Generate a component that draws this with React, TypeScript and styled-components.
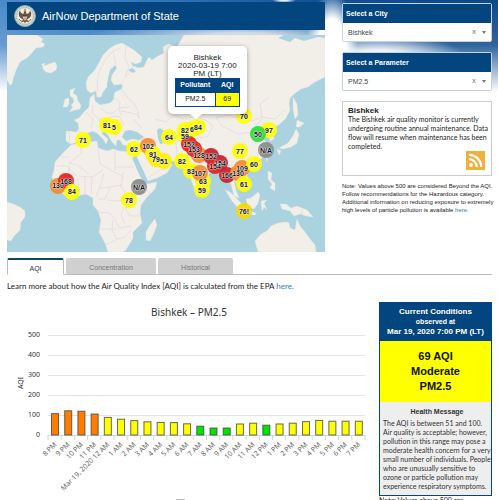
import React from 'react';
import styled, { createGlobalStyle } from 'styled-components';

const navy = '#03467f';

const GlobalStyle = createGlobalStyle`
  * { box-sizing: border-box; }
  html { scrollbar-width: none; }
  body {
    margin: 0;
    background: #fff;
    color: #222;
    font-family: "Liberation Sans", Arial, sans-serif;
    font-size: 7px;
  }
`;

const Page = styled.div`
  min-height: 100vh;
  padding: 2px 6px 0 7px;
  background:
    radial-gradient(ellipse 26px 60px at calc(100% - 166px) 52px, #fff 55%, rgba(255, 255, 255, 0) 100%),
    radial-gradient(ellipse 90px 26px at calc(100% - 120px) 60px, #f4f7fa 35%, rgba(244, 247, 250, 0) 100%),
    radial-gradient(ellipse 150px 12px at calc(100% - 258px) 35px, #cfdae8 20%, rgba(207, 218, 232, 0) 100%),
    radial-gradient(ellipse 12px 3px at calc(100% - 214px) 0, #e9f0f6 30%, rgba(233, 240, 246, 0) 100%),
    linear-gradient(to bottom, rgba(255, 255, 255, 0) 0, rgba(255, 255, 255, 0.15) 45px, #fff 92px),
    linear-gradient(to right, #4a8aca, #2f72b8 35%, #0f4f95 65%, #0b488c);
`;

const TopRow = styled.div`
  display: grid;
  grid-template-columns: minmax(0, 1fr) 150px;
  column-gap: 17px;
`;

const Brand = styled.header`
  display: flex;
  align-items: center;
  gap: 6px;
  height: 28px;
  padding-left: 7px;
  background: ${navy};
  color: #fff;
`;

const BrandTitle = styled.h1`
  margin: 0;
  font-size: 11px;
  font-weight: 400;
`;

const MapFrame = styled.div`
  position: relative;
  aspect-ratio: 318 / 217;
  margin-top: 5px;
  background: #aad3df;
  overflow: hidden;
`;

const MapArt = styled.svg`
  display: block;
  width: 100%;
  height: 100%;
`;

const Pin = styled.button<{ $x: number; $y: number }>`
  position: absolute;
  left: ${(p) => ((p.$x - 7) / 318) * 100}%;
  top: ${(p) => ((p.$y - 35) / 217) * 100}%;
  width: 16px;
  height: 16px;
  margin: -8px 0 0 -8px;
  padding: 0;
  display: flex;
  align-items: center;
  justify-content: center;
  border: 0;
  border-radius: 50%;
  background: none;
  color: #111;
  font: bold 7px "Liberation Sans", Arial, sans-serif;
  text-shadow: 0 0 1px #fff, 0 0 1px #fff, 0 0 2px #fff;
`;

const Popup = styled.div`
  position: absolute;
  left: 50.6%;
  top: 5%;
  width: 79px;
  height: 68px;
  padding: 8px 7px 0;
  border-radius: 5px;
  background: #fff;
  box-shadow: 0 1px 5px rgba(0, 0, 0, 0.35);
  font-size: 8px;
  line-height: 8px;
  text-align: center;

  &::after {
    content: "";
    position: absolute;
    left: 22px;
    top: 100%;
    border: 6px solid transparent;
    border-top: 5px solid #fff;
    border-bottom: 0;
  }
`;

const PopupTable = styled.table`
  width: 100%;
  border-collapse: collapse;
  table-layout: fixed;
  font-size: 7px;
  th {
    height: 14px;
    padding: 0;
    background: ${navy};
    color: #fff;
    border: 1px solid ${navy};
  }
  th:first-child { width: 62%; }
  td {
    height: 14px;
    padding: 0;
    border: 1px solid ${navy};
  }
  td:last-child { background: #ff0; }
`;

const Sidebar = styled.aside`
  padding-top: 1px;
`;

const Picker = styled.div`
  margin-bottom: 10px;
  border: 1px solid #c9d3dc;
  border-radius: 2px;
  background: #fff;
`;

const PickerLabel = styled.label`
  display: block;
  height: 19px;
  padding-left: 3px;
  background: ${navy};
  color: #fff;
  font-weight: 700;
  line-height: 19px;
`;

const PickerField = styled.div`
  display: flex;
  align-items: center;
  height: 18px;
  padding: 0 5px;
`;

const PickerSelect = styled.select`
  flex: 1;
  min-width: 0;
  padding: 0;
  border: 0;
  appearance: none;
  background: transparent;
  color: #444;
  font: inherit;
`;

const ClearButton = styled.button`
  padding: 0;
  border: 0;
  background: none;
  color: #777;
  font: inherit;
  font-size: 8px;
  line-height: 8px;
`;

const Caret = styled.span`
  margin-left: 6px;
  border: 2px solid transparent;
  border-top: 3px solid #777;
  border-bottom: 0;
`;

const InfoCard = styled.section`
  padding: 4px 2px 5px 5px;
  border: 1px solid #ccc;
  background: #fff;
`;

const InfoTitle = styled.h2`
  margin: 0;
  font-size: 8px;
  line-height: 9px;
`;

const Paragraph = styled.p`
  margin: 0;
  font-family: Lato, Arial, sans-serif;
  line-height: 9px;
`;

const FeedLink = styled.a`
  display: block;
  width: 19px;
  margin: 0 4px 0 auto;
  svg { display: block; }
`;

const Note = styled.p`
  margin: 6px -4px 0 0;
  font-size: 6px;
  line-height: 8px;
`;

const Link = styled.a`
  color: #337ab7;
  text-decoration: none;
`;

const Tabs = styled.div`
  display: flex;
  gap: 2px;
  margin-top: 6px;
  border-bottom: 1px solid #bbb;
`;

const Tab = styled.button<{ $w: number; $active?: boolean }>`
  width: ${(p) => p.$w}px;
  height: 17px;
  margin-bottom: -1px;
  padding: 2px 0 0;
  border: 1px solid ${(p) => (p.$active ? '#bbb' : '#d0d0d0')};
  border-top: ${(p) => (p.$active ? '2px solid #0b4a5a' : '1px solid #d0d0d0')};
  border-bottom-color: ${(p) => (p.$active ? '#fff' : '#bbb')};
  border-radius: 2px 2px 0 0;
  background: ${(p) => (p.$active ? '#fff' : '#d0d0d0')};
  color: ${(p) => (p.$active ? '#333' : '#777')};
  font: 7px "Liberation Sans", Arial, sans-serif;
`;

const LearnMore = styled(Paragraph)`
  margin-top: 7px;
  font-size: 8px;
`;

const BottomRow = styled.div`
  display: grid;
  grid-template-columns: minmax(0, 1fr) 113px;
  column-gap: 12px;
  margin-top: 11px;
`;

const ChartArt = styled.svg`
  display: block;
  width: 100%;
  height: auto;
  font-family: "Noto Sans", "Open Sans", sans-serif;
`;

const Conditions = styled.section`
  border: 1px solid ${navy};
  background: #eee;
`;

const ConditionsHead = styled.header`
  height: 38px;
  padding-top: 4px;
  background: ${navy};
  color: #fff;
  font-size: 7px;
  font-weight: 700;
  line-height: 10px;
  text-align: center;
`;

const HeadLine = styled.div`
  font-size: 8px;
  white-space: nowrap;
`;

const Reading = styled.div`
  padding: 8px 0;
  background: #ff0;
  color: #111;
  font-size: 11px;
  font-weight: 700;
  line-height: 15px;
  text-align: center;
`;

const Health = styled.div`
  padding: 5px 0 4px 3px;
  color: #333;
`;

const HealthTitle = styled.h3`
  margin: 0 0 2px;
  font-size: 7px;
  line-height: 10px;
  text-align: center;
`;

const Y = '#ffff00', O = '#f58a2c', R = '#e02420', C = '#c9202c', G = '#2fdc3c', N = '#8b8b8b';
const pins: [string, number, number, string][] = [
  ['81', 107, 125, Y], ['5', 114, 127, Y], ['71', 83, 140, Y], ['64', 169, 137, Y],
  ['62', 134, 149, Y], ['102', 148, 146, O], ['91', 153, 154, Y], ['79', 156, 159, '#fff000'],
  ['51', 164, 161, '#fff000'], ['130', 58, 186, O], ['168', 66, 181, R], ['84', 72, 192, Y],
  ['N/A', 139, 187, N], ['78', 129, 200, Y], ['82', 185, 130, Y], ['59', 185, 136, Y],
  ['6', 192, 129, Y], ['84', 198, 127, Y], ['128', 199, 155, O], ['152', 189, 144, R],
  ['153', 194, 149, R], ['82', 182, 161, Y], ['83', 191, 171, Y], ['63', 203, 181, Y],
  ['107', 200, 173, O], ['59', 202, 190, Y], ['152', 211, 156, C], ['154', 220, 163, C],
  ['154', 215, 166, R], ['166', 227, 175, C], ['109', 242, 168, O], ['130', 238, 173, O],
  ['60', 254, 164, Y], ['61', 244, 184, Y], ['77', 240, 151, Y], ['N/A', 266, 150, N],
  ['97', 269, 130, Y], ['50', 258, 134, G], ['70', 244, 116, Y], ['76!', 244, 211, '#f8d800'],
];

const land = [
  // Greenland and Iceland
  'M7 35H37L43 39L41 42L45 44L43 47L36 48L31 54L27 58L20 62L17 68L15 73L13 79L12 84L10 85L7 80Z',
  'M42 64L45 63L44 66L49 64L55 62L57 66L56 70L51 73L46 72L43 69Z',
  // British Isles
  'M70 90L75 88L73 93L77 96L78 101L81 105L80 109L75 110L69 112L73 107L71 105L74 102L73 98L70 96Z',
  'M65 99L69 98L69 104L67 107L63 107Z',
  // Scandinavia with Kola
  'M86 83L88 77L94 71L99 63L103 55L109 49L115 45L122 43L127 46L134 50L142 57L141 62L136 64L131 62L133 67L130 73L126 76L122 84L114 85L111 80L112 75L117 68L115 65L110 70L108 78L107 87L103 92L101 97L97 97L96 91L91 93L87 90Z',
  // Eurasia
  'M90 98L94 94L95 101L100 105L110 103L114 99L113 93L122 89L122 82L126 76L130 73L134 66L138 68L144 67L147 60L149 57L152 60L158 56L164 53L163 47L168 44L177 47L184 35H325V77L315 82L308 87L301 89L294 94L290 98L289 104L290 110L286 118L280 124L275 127L273 132L274 139L270 141L268 134L265 131L260 133L261 137L266 142L267 150L263 157L257 162L250 166L245 167L247 175L248 182L242 188L237 183L234 181L236 190L239 198L234 196L231 184L227 180L222 173L217 169L212 171L206 177L202 185L198 194L194 188L190 176L188 168L182 165L177 161L170 161L163 156L160 154L163 160L168 161L172 165L167 173L157 178L148 181L144 174L140 164L137 157L139 151L140 145L132 146L123 145L120 140L117 140L116 146L112 142L108 135L103 130L102 134L108 139L106 144L103 139L97 133L92 131L86 134L81 138L77 142L71 144L66 141L66 131L76 132L79 129L78 123L74 120L79 118L84 112L89 107Z',
  // Africa and Madagascar
  'M71 145L80 143L97 141L98 148L107 151L113 149L120 151L131 152L134 155L133 159L137 170L142 180L147 184L157 182L155 189L147 197L141 205L140 214L142 223L137 228L133 232L133 238L126 250L123 252H108L105 243L99 232L101 220L98 211L93 205L93 198L86 194L77 196L69 198L62 193L56 187L52 177L54 170L55 162L63 153Z',
  'M155 219L157 225L154 233L150 241L146 240L146 232L150 225Z',
  // South America
  'M7 202L13 204L20 207L25 211L25 217L21 222L20 230L14 236L11 241L7 240Z',
  // Islands of South-East Asia
  'M225 190L230 192L236 198L242 204L243 210L238 208L232 201Z', 'M241 211L249 211L256 213L255 215L245 214Z',
  'M246 199L251 198L258 192L260 195L258 203L254 209L248 207Z', 'M261 201L267 200L264 203L267 210L264 207L262 211Z',
  'M268 171L272 173L271 180L275 183L275 191L270 188L272 184L268 179Z',
  'M280 204L286 204L291 208L297 206L307 210L313 217L306 216L300 214L294 216L290 211L282 209Z',
  'M266 157L268 156L267 162Z', 'M202 191L205 193L204 197L202 196Z',
  // Japan and Sakhalin
  'M297 120L304 123L300 127L296 127Z', 'M296 129L299 134L297 143L291 147L283 149L279 148L288 143L293 136Z', 'M277 149L281 151L279 155Z',
  'M293 97L297 104L298 115L295 119L293 109Z',
  // Australia
  'M258 252L255 241L261 234L267 231L271 226L278 223L286 222L289 223L290 228L295 230L297 219L300 226L305 232L310 239L315 245L316 252Z',
].join('');

const water = [
  'M122 137L125 131L130 130L137 132L144 137L140 140L132 139L126 141Z',
  'M157 130L160 128L164 131L163 135L165 143L160 144L158 138Z',
  'M132 158L136 157L143 170L147 179L145 181L139 172Z',
  'M107 82L111 86L124 86L116 89L113 98L107 101L102 97L107 90Z',
  'M306 90L315 83L325 81V103L318 101L312 95Z',
  'M128 70L132 68L136 71L133 73Z',
  'M278 38L284 35H325V38L318 37L304 41L295 38L290 42Z',
].join('');

const borders =
  'M98 92L97 83L99 72L105 60L113 51L121 48M113 51L116 65M126 46L125 58L129 67L125 77M122 90L127 97L134 103L138 111L139 118M114 98L120 102L119 110L122 116M86 112L93 119L91 128M93 105L92 113L99 119L107 118L114 116L120 117L124 125M101 108L106 113L113 113L119 108L130 107M99 119L101 127M108 119L113 126L119 128M113 128L116 137M66 133H70L69 142M76 131L85 133M134 119L141 128M121 111L136 114L140 119M140 138L149 139L154 148M147 146L153 157M140 147L144 153L151 159M155 119L166 122L174 115L184 119L196 116L207 121L213 126L207 137L198 138L190 143M216 118L229 115L241 119L252 121L262 117L275 119L285 110M216 118L222 126L238 134L251 132L262 119M165 141L176 143L182 139L190 141M176 143L177 157M183 157L190 149L195 144M198 152L209 161L217 163L222 160L229 165L236 165L244 166M222 166L225 175M235 166L239 178M262 117L260 104L269 97M80 144L82 153L69 163L77 165L89 174M98 149L100 164L111 170L124 177M115 151V170M115 167H133M61 157L69 157M56 166L66 166L77 176M69 165L69 178L58 180M79 176L92 177L103 170M92 176L91 194M104 173L100 187L96 196M99 188L110 187L122 185M123 172L121 187L128 195L137 195L144 192L139 184M110 188L105 199H98M107 200L119 201L127 196M98 212L110 213L115 219L119 228L131 226M128 200L126 210L130 216L140 216M113 220L112 230L117 239L125 237L131 230M99 229H117M105 245L112 242L117 239M124 207L121 215L125 224M64 178L66 190M78 178L79 196M85 177L85 194M146 190L151 194L156 188M148 178L158 171L169 168M302 210V215';

const values: [string, number, string][] = [
  ['8 PM', 107, '#ff7e00'], ['9 PM', 121, '#ff7e00'], ['10 PM', 119, '#ff7e00'], ['11 PM', 105, '#ff7e00'],
  ['Mar 19, 2020 12 AM', 88, Y], ['1 AM', 79, Y], ['2 AM', 72, Y], ['3 AM', 66, Y], ['4 AM', 63, Y],
  ['5 AM', 62, Y], ['6 AM', 56, Y], ['7 AM', 44, '#00e400'], ['8 AM', 35, '#00e400'], ['9 AM', 35, '#00e400'],
  ['10 AM', 55, Y], ['11 AM', 59, Y], ['12 PM', 49, '#00e400'], ['1 PM', 55, Y], ['2 PM', 59, Y],
  ['3 PM', 67, Y], ['4 PM', 73, Y], ['5 PM', 69, Y], ['6 PM', 69, Y], ['7 PM', 69, Y],
];

const Seal = () => (
  <svg width="22" height="22" viewBox="0 0 44 44" role="img" aria-label="Department of State seal">
    <circle cx="22" cy="22" r="21" fill="#d8dcd2" stroke="#8ca6b4" strokeWidth="2" />
    <circle cx="22" cy="22" r="17.5" fill="none" stroke="#79909f" strokeWidth="1.5" strokeDasharray="2 1.5" />
    <circle cx="22" cy="22" r="14.5" fill="#f1eee1" />
    <path d="M20 13q2-3 4 0l1 5q6-1 7-7 5 7 0 14l-6 4 4 6-6-2-2 4-2-4-6 2 4-6-6-4q-5-7 0-14 1 6 7 7z" fill="#71533c" />
    <path d="M18 20h8v5q0 4-4 6-4-2-4-6z" fill="#eee" />
    <path d="M18 20h8v3h-8z" fill="#29477a" />
    <path d="M20 23v6M22 23v7M24 23v6" stroke="#b54242" />
    <path d="M10 28q3 5 7 5M34 28q-3 5-7 5" stroke="#67805a" strokeWidth="2" fill="none" />
    <circle cx="22" cy="10" r="2.5" fill="#b6a96c" />
  </svg>
);

const FeedIcon = () => (
  <svg width="19" height="19" viewBox="0 0 19 19" role="img" aria-label="RSS feed">
    <rect width="19" height="19" fill="#efb03c" />
    <circle cx="5" cy="14" r="1.9" fill="#fff" />
    <path d="M3 8.2A7.8 7.8 0 0 1 10.8 16M3 3.8A12.2 12.2 0 0 1 15.2 16" fill="none" stroke="#fff" strokeWidth="2.2" />
  </svg>
);

const AqiChart = () => {
  const step = 317 / 24;
  return (
    <ChartArt viewBox="0 0 360 198" role="img" aria-label="Bishkek PM2.5 AQI by hour">
      <text x="182" y="14" fontSize="10" fill="#333" textAnchor="middle">Bishkek – PM2.5</text>
      {[0, 100, 200, 300, 400, 500].map((v) => (
        <g key={v}>
          <path d={`M41 ${133.5 - v / 5}H358`} stroke={v ? '#e3e3e3' : '#ccd6eb'} />
          <text x="33" y={135 - v / 5} fontSize="7" fill="#333" textAnchor="end">{v}</text>
        </g>
      ))}
      <text transform="translate(16 81) rotate(-90)" fontSize="7" fill="#333" textAnchor="middle">AQI</text>
      {values.map(([label, v, color], i) => {
        const x = 41 + step * i;
        return (
          <g key={i}>
            <path d={`M${x} 133v5`} stroke="#ccd6eb" />
            <rect x={x + 3.5} y={133 - v / 5} width="7" height={v / 5} fill={color} stroke="#444" strokeOpacity="0.8" />
            <text transform={`translate(${x + 9} 143) rotate(-45)`} fontSize="7" fill="#666" textAnchor="end">{label}</text>
          </g>
        );
      })}
      <path d="M358 133v5" stroke="#ccd6eb" />
      <path d="M169 197.5h9" stroke="#bbb" />
    </ChartArt>
  );
};

const PickerBox = ({ id, label, value }: { id: string; label: string; value: string }) => (
  <Picker>
    <PickerLabel htmlFor={id}>{label}</PickerLabel>
    <PickerField>
      <PickerSelect id={id} defaultValue={value}><option>{value}</option></PickerSelect>
      <ClearButton type="button" aria-label="Clear">x</ClearButton>
      <Caret />
    </PickerField>
  </Picker>
);

export default function App() {
  return (
    <Page>
      <GlobalStyle />
      <TopRow>
        <main>
          <Brand>
            <Seal />
            <BrandTitle>AirNow Department of State</BrandTitle>
          </Brand>
          <MapFrame>
            <MapArt viewBox="7 35 318 217" aria-hidden="true">
              <path d={land} fill="#f2efe9" stroke="#e8e4e0" strokeWidth="0.4" strokeLinejoin="round" />
              <path d={water} fill="#aad3df" />
              <path d={borders} fill="none" stroke="#e4cedb" strokeWidth="0.6" />
              {pins.map(([, x, y, c], i) => (
                <circle key={i} cx={x} cy={y} r="8" fill={c} fillOpacity="0.93" />
              ))}
            </MapArt>
            {pins.map(([t, x, y], i) => (
              <Pin key={i} type="button" $x={x} $y={y}>{t}</Pin>
            ))}
            <Popup>
              Bishkek<br />2020-03-19 7:00 PM (LT)
              <PopupTable>
                <thead><tr><th>Pollutant</th><th>AQI</th></tr></thead>
                <tbody><tr><td>PM2.5</td><td>69</td></tr></tbody>
              </PopupTable>
            </Popup>
          </MapFrame>
        </main>
        <Sidebar>
          <PickerBox id="city" label="Select a City" value="Bishkek" />
          <PickerBox id="parameter" label="Select a Parameter" value="PM2.5" />
          <InfoCard>
            <InfoTitle>Bishkek</InfoTitle>
            <Paragraph>The Bishkek air quality monitor is currently undergoing routine annual maintenance. Data flow will resume when maintenance has been completed.</Paragraph>
            <FeedLink href="#feed"><FeedIcon /></FeedLink>
          </InfoCard>
          <Note>
            Note: Values above 500 are considered Beyond the AQI. Follow recommendations for the Hazardous category. Additional information on reducing exposure to extremely high levels of particle pollution is available <Link href="#exposure">here</Link>.
          </Note>
        </Sidebar>
      </TopRow>
      <Tabs role="tablist">
        <Tab type="button" role="tab" aria-selected="true" $w={57} $active>AQI</Tab>
        <Tab type="button" role="tab" aria-selected="false" $w={90}>Concentration</Tab>
        <Tab type="button" role="tab" aria-selected="false" $w={75}>Historical</Tab>
      </Tabs>
      <LearnMore>
        Learn more about how the Air Quality Index [AQI] is calculated from the EPA <Link href="#epa">here.</Link>
      </LearnMore>
      <BottomRow>
        <AqiChart />
        <div>
          <Conditions>
            <ConditionsHead>
              <HeadLine>Current Conditions</HeadLine>
              observed at
              <HeadLine>Mar 19, 2020 7:00 PM (LT)</HeadLine>
            </ConditionsHead>
            <Reading>69 AQI<br />Moderate<br />PM2.5</Reading>
            <Health>
              <HealthTitle>Health Message</HealthTitle>
              <Paragraph>The AQI is between 51 and 100. Air quality is acceptable; however, pollution in this range may pose a moderate health concern for a very small number of individuals. People who are unusually sensitive to ozone or particle pollution may experience respiratory symptoms.</Paragraph>
            </Health>
          </Conditions>
          <Paragraph>Note: Values above 500 are considered</Paragraph>
        </div>
      </BottomRow>
    </Page>
  );
}
